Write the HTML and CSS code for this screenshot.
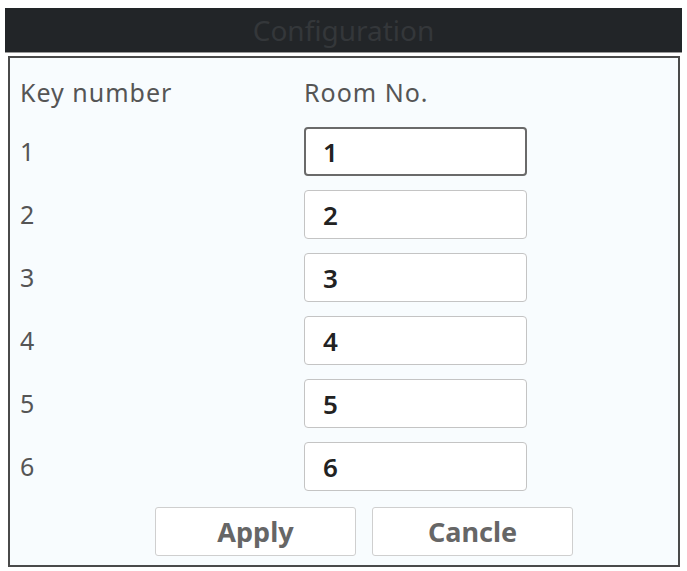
FILE: index.html
```html
<!DOCTYPE html>
<html lang="en">
  <head>
    <meta charset="UTF-8" />
    <title>Configuration</title>
    <link rel="stylesheet" href="styles.css">
  </head>
  <body>
    <div class="dialog">
      <div class="title-bar">Configuration</div>
      <div class="panel">
        <div class="grid">
          <div class="head">Key number</div>
          <div class="head">Room No.</div>

          <div class="key">1</div>
          <input class="room focused" type="text" value="1" />
          <div class="key">2</div>
          <input class="room" type="text" value="2" />
          <div class="key">3</div>
          <input class="room" type="text" value="3" />
          <div class="key">4</div>
          <input class="room" type="text" value="4" />
          <div class="key">5</div>
          <input class="room" type="text" value="5" />
          <div class="key">6</div>
          <input class="room" type="text" value="6" />
        </div>
        <div class="actions">
          <button id="apply">Apply</button>
          <button id="cancel">Cancle</button>
        </div>
      </div>
    </div>
  </body>
</html>
```

FILE: styles.css
```css
body {
  margin: 0;
  background-color: #ffffff;
  font-family: "Noto Sans", "Open Sans", sans-serif;
}
.dialog {
  padding: 8px 5px 0 5px;
}
.title-bar {
  height: 44px;
  background-color: #222528;
  color: #34373a;
  font-size: 28px;
  line-height: 44px;
  text-align: center;
  border-bottom: 1px solid #9a9a9a;
}
.panel {
  margin: 3px 2px 0 3px;
  border: 2px solid #4a4a4a;
  background-color: #f8fcfe;
  padding: 16px 10px 0 10px;
  height: 511px;
  box-sizing: border-box;
}
.grid {
  display: grid;
  grid-template-columns: 284px 223px;
  grid-template-rows: 39px repeat(6, 49px);
  row-gap: 14px;
}
.head {
  font-size: 25px;
  letter-spacing: 1px;
  color: #555;
  line-height: 36px;
}
.key {
  font-size: 25px;
  color: #555;
  line-height: 49px;
}
.room {
  box-sizing: border-box;
  width: 223px;
  height: 49px;
  border: 1px solid #c4c4c4;
  border-radius: 4px;
  background: #fff;
  padding: 0 0 0 18px;
  font-family: "Noto Sans", sans-serif;
  font-size: 26px;
  font-weight: 600;
  color: #222;
  outline: none;
}
.room.focused {
  border: 2px solid #6a6a6a;
  padding-left: 17px;
}
.actions {
  display: flex;
  gap: 16px;
  margin-top: 16px;
  padding-left: 135px;
}
.actions button {
  width: 201px;
  height: 49px;
  background: #fff;
  border: 1px solid #cfcfcf;
  border-radius: 3px;
  font-family: "Noto Sans", sans-serif;
  font-size: 27px;
  font-weight: 700;
  color: #666;
  cursor: pointer;
}
```
